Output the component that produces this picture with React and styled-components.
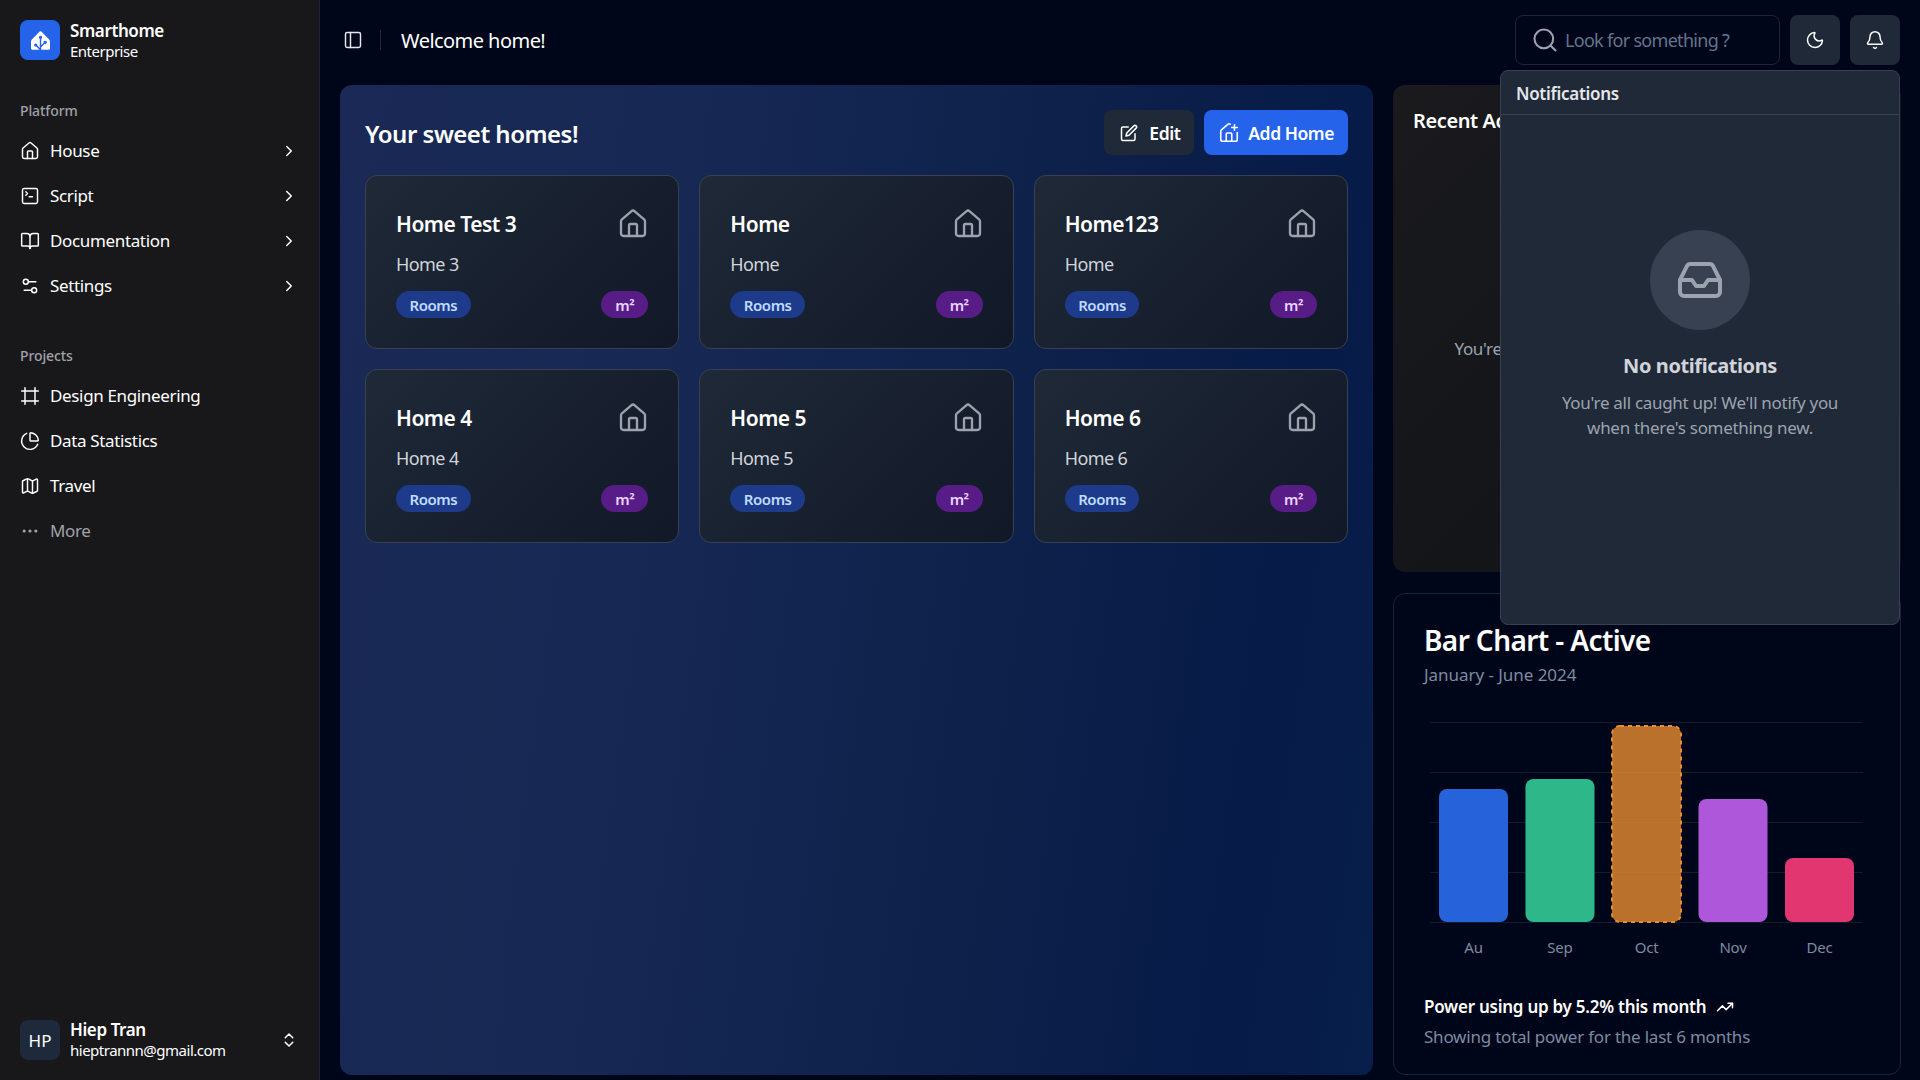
import React from 'react';
import styled, { createGlobalStyle } from 'styled-components';
import {
  Bell, BookOpen, ChartPie, ChevronRight, ChevronsUpDown, Ellipsis, Frame, House,
  Inbox, Map as MapIcon, Moon, PanelLeft, Search, Settings2, SquareTerminal, TrendingUp,
} from 'lucide-react';
import { FiEdit } from 'react-icons/fi';
import { SiHomeassistant } from 'react-icons/si';

const platformItems = [
  { label: 'House', icon: House },
  { label: 'Script', icon: SquareTerminal },
  { label: 'Documentation', icon: BookOpen },
  { label: 'Settings', icon: Settings2 },
];

const projectItems = [
  { label: 'Design Engineering', icon: Frame },
  { label: 'Data Statistics', icon: ChartPie },
  { label: 'Travel', icon: MapIcon },
];

const homes = [
  { name: 'Home Test 3', desc: 'Home 3' },
  { name: 'Home', desc: 'Home' },
  { name: 'Home123', desc: 'Home' },
  { name: 'Home 4', desc: 'Home 4' },
  { name: 'Home 5', desc: 'Home 5' },
  { name: 'Home 6', desc: 'Home 6' },
];

const bars = [
  { label: 'Au', x: 15, top: 74, color: '#2662d9' },
  { label: 'Sep', x: 101.5, top: 64, color: '#2eb88a' },
  { label: 'Oct', x: 188, top: 11, color: '#e88c30', active: true },
  { label: 'Nov', x: 274.5, top: 84, color: '#af57db' },
  { label: 'Dec', x: 361, top: 143, color: '#e23670' },
];

// house with the plus at the top right, lucide's current one has it at the bottom
const AddHomeIcon = () => (
  <svg width="22" height="22" viewBox="0 0 24 24" fill="none" stroke="currentColor" strokeWidth="1.75" strokeLinecap="round" strokeLinejoin="round">
    <path d="M13.22 2.416a2 2 0 0 0-2.511.057l-7 5.999A2 2 0 0 0 3 10v9a2 2 0 0 0 2 2h14a2 2 0 0 0 2-2v-7.354" />
    <path d="M15 21v-8a1 1 0 0 0-1-1h-4a1 1 0 0 0-1 1v8" />
    <path d="M15 6h6" />
    <path d="M18 3v6" />
  </svg>
);

const App = () => {
  return (
    <>
      <GlobalStyle />
      <Page>
        <Sidebar>
          <Brand>
            <LogoBox><SiHomeassistant size={19} /></LogoBox>
            <BrandName>
              <strong>Smarthome</strong>
              <span>Enterprise</span>
            </BrandName>
          </Brand>

          <NavSection>
            <NavLabel>Platform</NavLabel>
            {platformItems.map(({ label, icon: Icon }) => (
              <NavItem key={label}>
                <Icon size={20} strokeWidth={1.75} />
                <span>{label}</span>
                <NavChevron><ChevronRight size={18} /></NavChevron>
              </NavItem>
            ))}
          </NavSection>

          <NavSection $second>
            <NavLabel>Projects</NavLabel>
            {projectItems.map(({ label, icon: Icon }) => (
              <NavItem key={label}>
                <Icon size={20} strokeWidth={1.75} />
                <span>{label}</span>
              </NavItem>
            ))}
            <NavItem $muted>
              <Ellipsis size={20} strokeWidth={1.75} />
              <span>More</span>
            </NavItem>
          </NavSection>

          <UserRow>
            <Avatar>HP</Avatar>
            <BrandText>
              <strong>Hiep Tran</strong>
              <span>hieptrannn@gmail.com</span>
            </BrandText>
            <NavChevron><ChevronsUpDown size={18} /></NavChevron>
          </UserRow>
        </Sidebar>

        <Main>
          <Header>
            <ToggleIcon><PanelLeft size={20} strokeWidth={1.75} /></ToggleIcon>
            <HeaderRule />
            <Welcome>Welcome home!</Welcome>
            <SearchBox>
              <Search size={28} strokeWidth={1.75} />
              <span>Look for something ?</span>
            </SearchBox>
            <IconButton><Moon size={20} strokeWidth={1.75} /></IconButton>
            <IconButton><Bell size={20} strokeWidth={1.75} /></IconButton>
          </Header>

          <Content>
            <HomesPanel>
              <PanelHead>
                <PanelTitle>Your sweet homes!</PanelTitle>
                <PanelActions>
                  <ActionButton>
                    <FiEdit size={18} />
                    Edit
                  </ActionButton>
                  <ActionButton $primary>
                    <AddHomeIcon />
                    Add Home
                  </ActionButton>
                </PanelActions>
              </PanelHead>
              <HomesGrid>
                {homes.map(home => (
                  <HomeCard key={home.name}>
                    <CardTop>
                      <CardName>{home.name}</CardName>
                      <CardIcon size={32} strokeWidth={1.75} />
                    </CardTop>
                    <CardDesc>{home.desc}</CardDesc>
                    <CardBadges>
                      <Badge>Rooms</Badge>
                      <Badge $purple>m²</Badge>
                    </CardBadges>
                  </HomeCard>
                ))}
              </HomesGrid>
            </HomesPanel>

            <SideColumn>
              <ActivityCard>
                <ActivityTitle>Recent Activity</ActivityTitle>
                <ActivityEmpty>You're all caught up! No recent activity to show yet</ActivityEmpty>
              </ActivityCard>

              <ChartCard>
                <ChartTitle>Bar Chart - Active</ChartTitle>
                <ChartSub>January - June 2024</ChartSub>
                <ChartSvg width="446" height="246" viewBox="0 0 446 246">
                  {[7, 57, 107, 157, 207].map(y => (
                    <line key={y} x1="6" x2="439" y1={y + 0.5} y2={y + 0.5} stroke="#141b2b" />
                  ))}
                  {bars.map(bar => (
                    <g key={bar.label}>
                      <rect
                        x={bar.x}
                        y={bar.top}
                        width="69"
                        height={207 - bar.top}
                        rx="8"
                        fill={bar.color}
                        fillOpacity={bar.active ? 0.8 : 1}
                        stroke={bar.active ? bar.color : 'none'}
                        strokeWidth={bar.active ? 2 : 0}
                        strokeDasharray={bar.active ? '4 4' : undefined}
                      />
                      <BarLabel x={bar.x + 34.5} y="238" textAnchor="middle">{bar.label}</BarLabel>
                    </g>
                  ))}
                </ChartSvg>
                <ChartNote>
                  Power using up by 5.2% this month
                  <TrendingUp size={18} strokeWidth={2} />
                </ChartNote>
                <ChartCaption>Showing total power for the last 6 months</ChartCaption>
              </ChartCard>
            </SideColumn>
          </Content>

          <Popover>
            <PopoverHead>Notifications</PopoverHead>
            <PopoverBody>
              <EmptyCircle><Inbox size={48} strokeWidth={2} /></EmptyCircle>
              <EmptyTitle>No notifications</EmptyTitle>
              <EmptyText>You're all caught up! We'll notify you when there's something new.</EmptyText>
            </PopoverBody>
          </Popover>
        </Main>
      </Page>
    </>
  );
};
export default App;

const GlobalStyle = createGlobalStyle`
  * { box-sizing: border-box; }
  html, body { margin: 0; padding: 0; height: 100%; background: #00061a; }
  body { font-family: 'Noto Sans', 'Open Sans', sans-serif; color: #fff; overflow: hidden; }
`;

const Page = styled.div`
  display: flex;
  width: 1920px;
  height: 1080px;
  background: #00061a;
`;

const Sidebar = styled.aside`
  width: 320px;
  flex-shrink: 0;
  display: flex;
  flex-direction: column;
  background: #18181b;
  border-right: 1px solid #1c2333;
  padding: 20px 20px 20px;
`;

const Brand = styled.div`
  display: flex;
  align-items: center;
  gap: 10px;
  height: 40px;
`;

const LogoBox = styled.div`
  width: 40px;
  height: 40px;
  border-radius: 8px;
  background: #2563eb;
  display: flex;
  align-items: center;
  justify-content: center;
  color: #fff;
`;

const BrandText = styled.div`
  display: flex;
  flex-direction: column;
  font-size: 15px;
  line-height: 20px;
  strong { font-size: 17px; font-weight: 600; letter-spacing: -0.4px; }
  span { letter-spacing: -0.5px; }
`;

const BrandName = styled(BrandText)`
  padding-top: 2px;
`;

const NavSection = styled.nav`
  display: flex;
  flex-direction: column;
  margin-top: ${props => (props.$second ? '38px' : '41px')};
`;

const NavLabel = styled.div`
  font-size: 14px;
  font-weight: 500;
  line-height: 20px;
  color: #a1a1aa;
  margin-bottom: 7px;
  letter-spacing: -0.1px;
`;

const NavItem = styled.div`
  height: 45px;
  display: flex;
  align-items: center;
  gap: 10px;
  font-size: 17px;
  letter-spacing: -0.35px;
  color: ${props => (props.$muted ? '#a1a1aa' : '#fff')};
  svg { flex-shrink: 0; }
`;

const NavChevron = styled.span`
  margin-left: auto;
  display: flex;
  color: #fff;
  margin-right: 1px;
`;

const UserRow = styled.div`
  margin-top: auto;
  display: flex;
  align-items: center;
  gap: 10px;
  height: 40px;
`;

const Avatar = styled.div`
  width: 40px;
  height: 40px;
  border-radius: 8px;
  background: #1e293b;
  display: flex;
  align-items: center;
  justify-content: center;
  font-size: 17px;
`;

const Main = styled.main`
  flex: 1;
  position: relative;
  display: flex;
  flex-direction: column;
  min-width: 0;
`;

const Header = styled.header`
  height: 85px;
  flex-shrink: 0;
  display: flex;
  align-items: center;
  padding: 0 20px 5px;
`;

const ToggleIcon = styled.span`
  display: flex;
  margin-left: 3px;
  color: #e5e7eb;
`;

const HeaderRule = styled.span`
  width: 1px;
  height: 20px;
  background: #1e2638;
  margin: 0 20px 0 17px;
`;

const Welcome = styled.div`
  font-size: 20px;
  letter-spacing: -0.55px;
  flex: 1;
`;

const SearchBox = styled.div`
  width: 265px;
  height: 50px;
  border: 1px solid #1c2536;
  border-radius: 8px;
  display: flex;
  align-items: center;
  gap: 6px;
  padding: 0 15px;
  color: #9ca3af;
  span {
    font-size: 18px;
    letter-spacing: -0.7px;
    color: #64748b;
  }
`;

const IconButton = styled.div`
  width: 50px;
  height: 50px;
  margin-left: 10px;
  border-radius: 8px;
  background: #1f2937;
  display: flex;
  align-items: center;
  justify-content: center;
  color: #fff;
`;

const Content = styled.div`
  flex: 1;
  display: grid;
  grid-template-columns: 1033px 507px;
  gap: 20px;
  padding: 0 20px 5px;
  min-height: 0;
`;

const HomesPanel = styled.section`
  border-radius: 12px;
  background: linear-gradient(98deg, #1a2955 0%, #162853 30%, #0e214b 62%, #061b47 86%, #081e4b 100%);
  padding: 25px;
`;

const PanelHead = styled.div`
  display: flex;
  justify-content: space-between;
  align-items: center;
  height: 45px;
  margin-bottom: 20px;
`;

const PanelTitle = styled.h1`
  margin: 0;
  padding-top: 2px;
  font-size: 24px;
  font-weight: 600;
  letter-spacing: -0.5px;
`;

const PanelActions = styled.div`
  display: flex;
  gap: 10px;
`;

const ActionButton = styled.div`
  height: 45px;
  padding: 0 14px 0 ${props => (props.$primary ? '14px' : '16px')};
  border-radius: 8px;
  display: flex;
  align-items: center;
  gap: ${props => (props.$primary ? '8px' : '11px')};
  font-size: 17.5px;
  font-weight: 600;
  letter-spacing: -0.45px;
  background: ${props => (props.$primary ? '#2563eb' : '#1f2937')};
`;

const HomesGrid = styled.div`
  display: grid;
  grid-template-columns: repeat(3, 1fr);
  grid-auto-rows: 174px;
  gap: 20px;
`;

const HomeCard = styled.article`
  border: 1px solid #374151;
  border-radius: 12px;
  background: linear-gradient(135deg, #1f2937, #111827);
  padding: 31px 30px 0;
`;

const CardTop = styled.div`
  display: flex;
  justify-content: space-between;
  align-items: center;
  height: 34px;
`;

const CardName = styled.h2`
  margin: 0;
  font-size: 21px;
  font-weight: 600;
  letter-spacing: -0.5px;
`;

const CardIcon = styled(House)`
  color: #9ca3af;
  margin-right: -1px;
`;

const CardDesc = styled.div`
  margin-top: 11px;
  font-size: 18px;
  line-height: 24px;
  letter-spacing: -0.6px;
  color: #d1d5db;
`;

const CardBadges = styled.div`
  margin-top: 15px;
  display: flex;
  justify-content: space-between;
  align-items: center;
`;

const Badge = styled.span`
  height: 27px;
  padding: 0 ${props => (props.$purple ? '14px' : '13.5px')};
  border-radius: 14px;
  display: inline-flex;
  align-items: center;
  font-size: 15px;
  font-weight: 600;
  letter-spacing: -0.45px;
  background: ${props => (props.$purple ? '#581c87' : '#1e3a8a')};
  color: ${props => (props.$purple ? '#e9d5ff' : '#bfdbfe')};
`;

const SideColumn = styled.div`
  display: grid;
  grid-template-rows: 487px 482px;
  gap: 21px;
`;

const ActivityCard = styled.section`
  border-radius: 12px;
  background: linear-gradient(135deg, #1a1a1d, #0f1114);
  padding: 20px;
  overflow: hidden;
`;

const ActivityTitle = styled.h3`
  margin: 0;
  font-size: 20px;
  line-height: 32px;
  font-weight: 600;
  letter-spacing: -0.4px;
`;

const ActivityEmpty = styled.p`
  margin: 200px 0 0;
  text-align: center;
  font-size: 17px;
  line-height: 24px;
  letter-spacing: -0.3px;
  color: #9ca3af;
  white-space: nowrap;
`;

const ChartCard = styled.section`
  border: 1px solid #1c2333;
  border-radius: 12px;
  padding: 26px 30px 0;
`;

const ChartTitle = styled.h3`
  margin: 0;
  font-size: 28px;
  line-height: 40px;
  font-weight: 600;
  letter-spacing: -0.6px;
`;

const ChartSub = styled.div`
  margin-top: 3px;
  font-size: 17px;
  line-height: 24px;
  letter-spacing: -0.05px;
  color: #7d8ba1;
`;

const ChartSvg = styled.svg`
  display: block;
  margin-top: 28px;
`;

const BarLabel = styled.text`
  font-size: 15px;
  letter-spacing: -0.2px;
  fill: #7d8ba1;
`;

const ChartNote = styled.div`
  margin-top: 34px;
  display: flex;
  align-items: center;
  gap: 10px;
  font-size: 17px;
  line-height: 24px;
  font-weight: 600;
  letter-spacing: -0.25px;
`;

const ChartCaption = styled.div`
  margin-top: 6px;
  font-size: 17px;
  line-height: 24px;
  letter-spacing: -0.22px;
  color: #7d8ba1;
`;

const Popover = styled.div`
  position: absolute;
  top: 70px;
  right: 20px;
  width: 400px;
  height: 555px;
  background: #1f2937;
  border: 1px solid #374151;
  border-radius: 8px;
`;

const PopoverHead = styled.div`
  height: 44px;
  padding: 2px 15px 0;
  display: flex;
  align-items: center;
  font-size: 17px;
  font-weight: 600;
  letter-spacing: -0.3px;
  color: #e5e7eb;
  border-bottom: 1px solid #374151;
`;

const PopoverBody = styled.div`
  display: flex;
  flex-direction: column;
  align-items: center;
  padding: 115px 40px 0;
  margin-top: -60px;
  padding-top: 175px;
`;

const EmptyCircle = styled.div`
  width: 100px;
  height: 100px;
  border-radius: 50%;
  background: #374151;
  display: flex;
  align-items: center;
  justify-content: center;
  color: #9ca3af;
`;

const EmptyTitle = styled.div`
  margin-top: 22px;
  font-size: 20px;
  line-height: 28px;
  font-weight: 700;
  letter-spacing: -0.4px;
  color: #d1d5db;
`;

const EmptyText = styled.p`
  margin: 10px 0 0;
  text-align: center;
  font-size: 17px;
  line-height: 25px;
  letter-spacing: -0.3px;
  color: #9ca3af;
`;
